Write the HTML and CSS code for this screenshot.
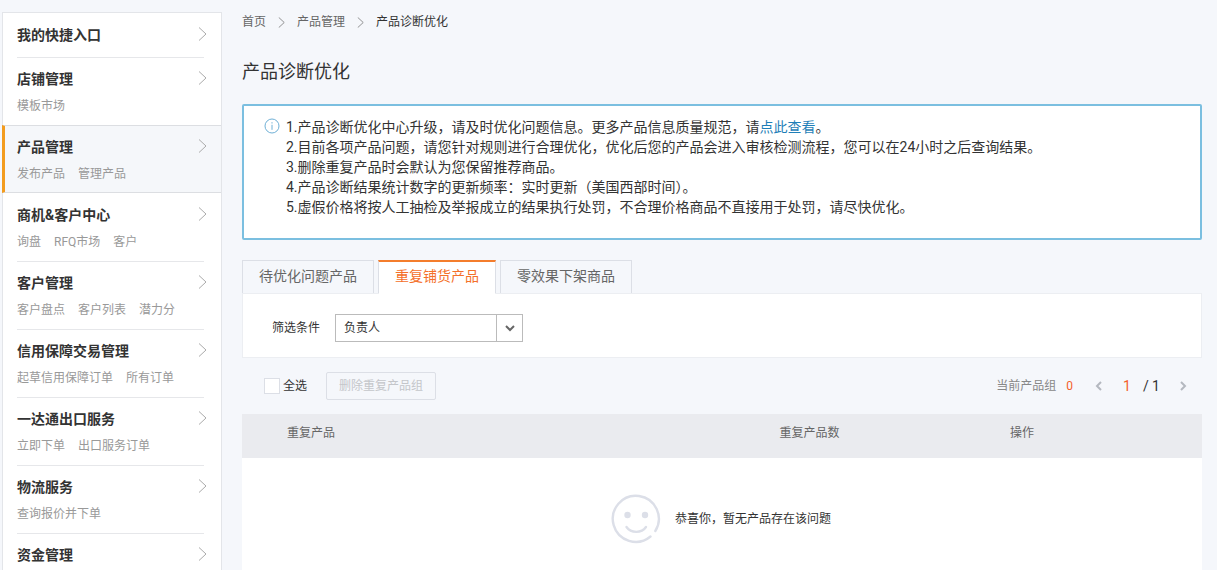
FILE: index.html
```html
<!DOCTYPE html>
<html lang="zh-CN">
<head>
    <meta charset="UTF-8">
    <title>产品诊断优化</title>
    <link rel="stylesheet" href="styles.css">
</head>
<body>
    <svg class="sprite" width="0" height="0" aria-hidden="true">
        <symbol id="arrow" viewBox="0 0 9 14">
            <path d="M1 0.5 L8 7 L1 13.5" fill="none" stroke="currentColor"/>
        </symbol>
    </svg>

    <div class="page">
        <!-- left menu -->
        <nav class="sidebar">
            <ul class="menu">
                <li class="menu-item short">
                    <div class="menu-inner">
                        <a class="menu-title" href="#">我的快捷入口 <svg class="menu-arrow"><use href="#arrow"/></svg></a>
                    </div>
                </li>
                <li class="menu-item">
                    <div class="menu-inner">
                        <a class="menu-title" href="#">店铺管理 <svg class="menu-arrow"><use href="#arrow"/></svg></a>
                        <div class="menu-links"><a href="#">模板市场</a></div>
                    </div>
                </li>
                <li class="menu-item active">
                    <div class="menu-inner">
                        <a class="menu-title" href="#">产品管理 <svg class="menu-arrow"><use href="#arrow"/></svg></a>
                        <div class="menu-links"><a href="#">发布产品</a><a href="#">管理产品</a></div>
                    </div>
                </li>
                <li class="menu-item">
                    <div class="menu-inner">
                        <a class="menu-title" href="#">商机&amp;客户中心 <svg class="menu-arrow"><use href="#arrow"/></svg></a>
                        <div class="menu-links"><a href="#">询盘</a><a href="#">RFQ市场</a><a href="#">客户</a></div>
                    </div>
                </li>
                <li class="menu-item">
                    <div class="menu-inner">
                        <a class="menu-title" href="#">客户管理 <svg class="menu-arrow"><use href="#arrow"/></svg></a>
                        <div class="menu-links"><a href="#">客户盘点</a><a href="#">客户列表</a><a href="#">潜力分</a></div>
                    </div>
                </li>
                <li class="menu-item">
                    <div class="menu-inner">
                        <a class="menu-title" href="#">信用保障交易管理 <svg class="menu-arrow"><use href="#arrow"/></svg></a>
                        <div class="menu-links"><a href="#">起草信用保障订单</a><a href="#">所有订单</a></div>
                    </div>
                </li>
                <li class="menu-item">
                    <div class="menu-inner">
                        <a class="menu-title" href="#">一达通出口服务 <svg class="menu-arrow"><use href="#arrow"/></svg></a>
                        <div class="menu-links"><a href="#">立即下单</a><a href="#">出口服务订单</a></div>
                    </div>
                </li>
                <li class="menu-item">
                    <div class="menu-inner">
                        <a class="menu-title" href="#">物流服务 <svg class="menu-arrow"><use href="#arrow"/></svg></a>
                        <div class="menu-links"><a href="#">查询报价并下单</a></div>
                    </div>
                </li>
                <li class="menu-item last">
                    <div class="menu-inner">
                        <a class="menu-title" href="#">资金管理 <svg class="menu-arrow"><use href="#arrow"/></svg></a>
                    </div>
                </li>
            </ul>
        </nav>

        <main class="content">
            <div class="breadcrumb">
                <a href="#">首页</a>
                <svg class="crumb-arrow"><use href="#arrow"/></svg>
                <a href="#">产品管理</a>
                <svg class="crumb-arrow"><use href="#arrow"/></svg>
                <span class="current">产品诊断优化</span>
            </div>

            <h1 class="title">产品诊断优化</h1>

            <div class="notice">
                <svg class="info-icon" viewBox="0 0 16 16">
                    <circle cx="8" cy="8" r="7" fill="none" stroke="#6fb0d6"/>
                    <path d="M8 4.2v1.3M8 6.8v5" stroke="#6fb0d6"/>
                </svg>
                <div class="notice-text">
                    <p>1.产品诊断优化中心升级，请及时优化问题信息。更多产品信息质量规范，请<a href="#">点此查看</a>。</p>
                    <p>2.目前各项产品问题，请您针对规则进行合理优化，优化后您的产品会进入审核检测流程，您可以在24小时之后查询结果。</p>
                    <p>3.删除重复产品时会默认为您保留推荐商品。</p>
                    <p>4.产品诊断结果统计数字的更新频率：实时更新（美国西部时间）。</p>
                    <p>5.虚假价格将按人工抽检及举报成立的结果执行处罚，不合理价格商品不直接用于处罚，请尽快优化。</p>
                </div>
            </div>

            <div class="tabs">
                <button class="tab" type="button">待优化问题产品</button>
                <button class="tab active" type="button">重复铺货产品</button>
                <button class="tab" type="button">零效果下架商品</button>
            </div>

            <div class="filter">
                <label for="owner">筛选条件</label>
                <div class="select-box">
                    <select id="owner">
                        <option>负责人</option>
                    </select>
                    <span class="select-arrow">
                        <svg width="10" height="7" viewBox="0 0 10 7"><path d="M1 1l4 4 4-4" fill="none" stroke="#666" stroke-width="2"/></svg>
                    </span>
                </div>
            </div>

            <div class="toolbar">
                <label class="check-all"><input type="checkbox">全选</label>
                <button class="delete-btn" type="button" disabled>删除重复产品组</button>
                <div class="pager">
                    <span>当前产品组</span>
                    <span class="count">0</span>
                    <button class="page-btn" type="button" aria-label="上一页">
                        <svg width="7" height="10" viewBox="0 0 7 10"><path d="M6 1L2 5l4 4" fill="none" stroke="#b4b8bf" stroke-width="2"/></svg>
                    </button>
                    <span class="page-now">1</span>
                    <span class="page-total">/ 1</span>
                    <button class="page-btn" type="button" aria-label="下一页">
                        <svg width="7" height="10" viewBox="0 0 7 10"><path d="M1 1l4 4-4 4" fill="none" stroke="#b4b8bf" stroke-width="2"/></svg>
                    </button>
                </div>
            </div>

            <table class="list">
                <thead>
                    <tr>
                        <th class="col-product">重复产品</th>
                        <th class="col-count">重复产品数</th>
                        <th class="col-action">操作</th>
                    </tr>
                </thead>
                <tbody>
                    <tr>
                        <td colspan="3">
                            <div class="empty">
                                <svg width="50" height="50" viewBox="0 0 50 50">
                                    <path d="M39.5 42.5A23 23 0 1 1 44.3 37" fill="none" stroke="#dcdfe8" stroke-width="2.4" stroke-linecap="round"/>
                                    <circle cx="16.5" cy="21" r="3.2" fill="#dcdfe8"/>
                                    <circle cx="34" cy="21" r="3.2" fill="#dcdfe8"/>
                                    <path d="M15.5 33c4.500 6.500 15 6.500 19.500 0" fill="none" stroke="#dcdfe8" stroke-width="2.4" stroke-linecap="round"/>
                                </svg>
                                <span>恭喜你，暂无产品存在该问题</span>
                            </div>
                        </td>
                    </tr>
                </tbody>
            </table>
        </main>
    </div>
</body>
</html>
```
FILE: styles.css
```css
* {
    box-sizing: border-box;
}
body {
    margin: 0;
    background-color: #f5f7fb;
    color: #333;
    font-family: Roboto, "Noto Sans CJK SC", sans-serif;
    font-size: 12px;
    line-height: 20px;
}
a {
    color: inherit;
    text-decoration: none;
}
p {
    margin: 0;
}
button,
select,
input {
    font: inherit;
    margin: 0;
}
button {
    cursor: pointer;
}
.sprite {
    position: absolute;
}
.page {
    display: flex;
    gap: 20px;
    min-height: 100vh;
    padding: 12px 15px 0 2px;
}

/* sidebar */
.sidebar {
    flex: 0 0 220px;
    background-color: #fff;
    border: 1px solid #e3e5e9;
    border-bottom: none;
}
.menu {
    list-style: none;
    margin: 0;
    padding: 0;
}
.menu-item {
    padding: 0 17px 0 14px;
}
.menu-inner {
    padding: 11px 0 9px;
    border-bottom: 1px solid #e6e7ea;
}
.menu-title {
    display: flex;
    justify-content: space-between;
    margin-right: -3px;
    font-size: 14px;
    font-weight: bold;
}
.menu-arrow {
    width: 9px;
    height: 14px;
    margin-top: 2px;
    color: #aaa;
}
.menu-links {
    display: flex;
    gap: 13px;
    margin-top: 7px;
    color: #999;
}
.menu-item.short .menu-inner {
    padding: 12px 0;
}
.menu-item.active {
    margin: -1px 0 1px -1px;
    padding-left: 12px;
    background-color: #f5f7fa;
    border: solid #dcdee2;
    border-width: 1px 0;
    border-left: 3px solid #f39c1f;
}
.menu-item.active .menu-inner {
    padding-bottom: 8px;
    border-bottom: none;
}
.menu-item.last .menu-inner {
    padding-bottom: 4px;
    border-bottom: none;
}

/* content */
.content {
    flex: 1;
    display: flex;
    flex-direction: column;
    min-width: 0;
}
.breadcrumb {
    display: flex;
    align-items: center;
    gap: 12px;
    color: #666;
}
.breadcrumb .current {
    color: #333;
}
.crumb-arrow {
    width: 7px;
    height: 11px;
    color: #777;
}
.title {
    margin: 28px 0 20px;
    font-size: 18px;
    font-weight: normal;
    line-height: 24px;
}
.notice {
    display: flex;
    gap: 6px;
    padding: 11px 20px 21px;
    background-color: #fff;
    border: 2px solid #7bbfe0;
    border-radius: 2px;
    font-size: 14px;
}
.info-icon {
    flex: none;
    width: 16px;
    height: 16px;
    margin-top: 1px;
}
.notice-text a {
    color: #1f7fb8;
}
.tabs {
    display: flex;
    gap: 4px;
    margin-top: 20px;
}
.tab {
    height: 34px;
    padding: 0 16px 2px;
    background-color: #f5f7fb;
    border: 1px solid #dcdfe6;
    color: #666;
    font-size: 14px;
}
.tab.active {
    padding-bottom: 3px;
    background-color: #fff;
    border-top: 2px solid #f47d2c;
    border-bottom-color: #fff;
    color: #f4702a;
    z-index: 1;
}
.filter {
    display: flex;
    align-items: center;
    gap: 15px;
    margin-top: -1px;
    padding: 20px 29px 15px;
    background-color: #fff;
    border: 1px solid #eceef2;
}
.select-box {
    display: grid;
    grid-template-columns: 1fr 26px;
    width: 188px;
    height: 28px;
    border: 1px solid #bbb;
}
.select-box select {
    grid-area: 1 / 1 / 2 / 3;
    appearance: none;
    padding: 0 8px;
    background: none;
    border: none;
    color: #333;
}
.select-arrow {
    grid-area: 1 / 2;
    display: flex;
    align-items: center;
    justify-content: center;
    border-left: 1px solid #bbb;
    pointer-events: none;
}
.toolbar {
    display: flex;
    align-items: center;
    padding: 14px 15px 14px 22px;
}
.check-all {
    display: flex;
    align-items: center;
    gap: 3px;
}
.check-all input {
    appearance: none;
    width: 16px;
    height: 16px;
    background-color: #fff;
    border: 1px solid #dcdfe6;
}
.delete-btn {
    height: 28px;
    margin-left: 19px;
    padding: 0 12px;
    background-color: #f5f7fb;
    border: 1px solid #dcdfe6;
    border-radius: 2px;
    color: #c4c6ca;
}
.pager {
    display: flex;
    align-items: center;
    margin-left: auto;
    color: #888;
}
.count {
    margin: 0 22px 0 10px;
    color: #f4602a;
}
.page-btn {
    display: flex;
    padding: 0;
    background: none;
    border: none;
}
.page-now {
    margin: 0 12px 0 21px;
    color: #f4602a;
    font-size: 14px;
}
.page-total {
    margin-right: 20px;
    color: #333;
    font-size: 14px;
}

/* table */
.list {
    flex: 1;
    display: flex;
    flex-direction: column;
    background-color: #fff;
}
.list thead,
.list tbody {
    display: block;
}
.list tr {
    display: flex;
}
.list thead tr {
    background-color: #eaebef;
    color: #666;
}
.list th {
    padding: 9px 0 15px;
    font-weight: normal;
    text-align: left;
}
.col-product {
    flex: 1;
}
.list .col-product {
    padding-left: 45px;
}
.col-count {
    width: 24%;
}
.col-action {
    width: 20%;
}
.list td {
    flex: 1;
    padding: 36px 2px 20px 0;
}
.empty {
    display: flex;
    align-items: center;
    justify-content: center;
    gap: 14px;
}
```
